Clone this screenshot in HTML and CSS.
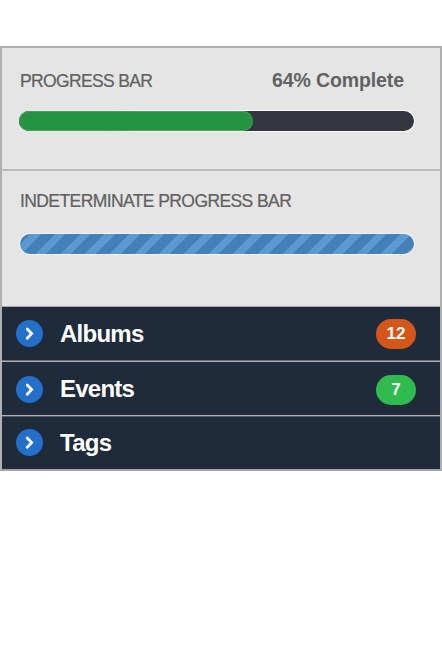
FILE: index.html
```html
<!DOCTYPE html>
<html lang="en">
<head>
<meta charset="utf-8">
<title>Progress</title>
<link rel="stylesheet" href="styles.css">
</head>
<body>
<main class="widget">
  <section class="panel panel-progress">
    <header class="panel-head">
      <h2 class="label">PROGRESS BAR</h2>
      <strong class="status">64% Complete</strong>
    </header>
    <div class="rim"><div class="track"><div class="fill"></div></div></div>
  </section>
  <section class="panel panel-indeterminate">
    <header class="panel-head">
      <h2 class="label label-long">INDETERMINATE PROGRESS BAR</h2>
    </header>
    <div class="track striped"></div>
  </section>
  <nav class="list">
    <a class="row albums">
      <svg class="icon" viewBox="0 0 27 27"><circle cx="13.5" cy="13.5" r="13.5"/><path d="M11.2 9 15.6 13.6 11.2 18.2"/></svg>
      <span class="name">Albums</span>
      <span class="badge orange">12</span>
    </a>
    <a class="row events">
      <svg class="icon" viewBox="0 0 27 27"><circle cx="13.5" cy="13.5" r="13.5"/><path d="M11.2 9 15.6 13.6 11.2 18.2"/></svg>
      <span class="name">Events</span>
      <span class="badge green">7</span>
    </a>
    <a class="row tags">
      <svg class="icon" viewBox="0 0 27 27"><circle cx="13.5" cy="13.5" r="13.5"/><path d="M11.2 9 15.6 13.6 11.2 18.2"/></svg>
      <span class="name">Tags</span>
    </a>
  </nav>
</main>
</body>
</html>
```
FILE: styles.css
```css
* { box-sizing: border-box; }
body {
  margin: 0;
  padding-top: 46px;
  background: #fff;
  font-family: "Liberation Sans", Arial, sans-serif;
}
.widget {
  width: 442px;
  height: 425px;
  border: 2px solid #b0b0b0;
  border-bottom-color: #a4a4a8;
}
.panel {
  background: #e5e5e5;
  padding: 0 25px 0 17px;
}
.panel-progress { height: 123px; border-bottom: 2px solid #bababa; }
.panel-indeterminate { height: 136px; border-bottom: 1px solid #a9a9a9; }
.panel-head {
  display: flex;
  justify-content: space-between;
  align-items: center;
  padding: 0 11px 0 1px;
}
.panel-progress .panel-head { height: 62px; padding-top: 2px; }
.panel-indeterminate .panel-head { height: 63px; padding-bottom: 4px; }
.label {
  margin: 0;
  padding-top: 2px;
  font-size: 17.5px;
  font-weight: 400;
  letter-spacing: -0.65px;
  color: #606060;
  -webkit-text-stroke: 0.2px #606060;
  white-space: nowrap;
}
.label-long { letter-spacing: -0.59px; }
.status {
  font-size: 19.5px;
  letter-spacing: -0.1px;
  color: #626262;
}
/* the light rim fades in along the left part of the bar */
.rim {
  width: 397px;
  margin-left: -1px;
  padding: 1px;
  border-radius: 11px;
  background: linear-gradient(90deg, #e5e5e5 90px, #fbfbfb 125px);
}
.track {
  height: 20px;
  border-radius: 10px;
  background: #33363f;
}
.fill {
  width: 234px;
  height: 20px;
  border-radius: 10px;
  background: #25933f;
  box-shadow: inset 0 1px #45a35b, inset 0 -1px #45a35b;
}
.striped {
  width: 394px;
  margin-left: 1px;
  background: repeating-linear-gradient(135deg, #457fb8 0 7.64px, #5c98d2 7.64px 15.06px, #457fb8 15.06px 17.45px);
  box-shadow: 0 0 0 1px #f4f5f6;
}
.list { background: #1f2a3a; }
.row {
  display: flex;
  align-items: center;
  height: 55px;
  padding: 0 24px 0 14px;
  color: #fff;
}
.albums { border-bottom: 1px solid #b0b2b2; box-shadow: inset 0 -1px #666d77; }
.events { border-bottom: 1px solid #505965; box-shadow: inset 0 -1px #b0b2b2; }
.tags { height: 52px; }
.icon { width: 27px; height: 27px; flex: none; }
.icon circle { fill: #246fca; }
.icon path { fill: none; stroke: #fff; stroke-width: 2.8; stroke-linecap: round; }
.albums .icon { margin-bottom: 1px; }
.events .icon { margin-top: 1px; }
.events .badge { margin-top: 2px; }
.tags .icon { margin-bottom: 1px; }
.name {
  flex: 1;
  padding-left: 17px;
  font-size: 24px;
  font-weight: 700;
  letter-spacing: -0.75px;
}
.badge {
  width: 40px;
  height: 30px;
  border-radius: 15px;
  text-align: center;
  font-size: 17px;
  line-height: 30px;
  font-weight: 700;
}
.orange { background: #d45618; }
.green { background: #30bb4f; }
```
